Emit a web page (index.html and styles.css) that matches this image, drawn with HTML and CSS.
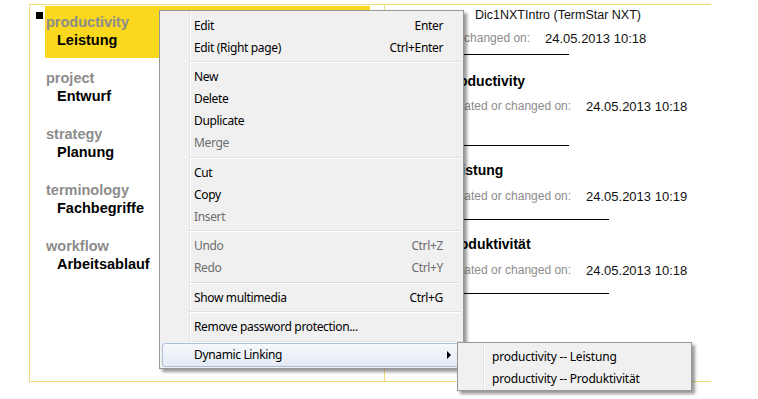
FILE: index.html
```html
<!DOCTYPE html>
<html lang="en">
<head>
    <meta charset="UTF-8">
    <meta name="viewport" content="width=device-width, initial-scale=1.0">
    <title>TermStar NXT - Dic1NXTIntro</title>
    <link rel="stylesheet" href="styles.css">
</head>
<body>
    <div class="frame">
        <div class="terms">
            <div class="term-row">
                <div class="gutter"><span class="mark"></span></div>
                <div class="term selected">
                    <div class="source">productivity</div>
                    <div class="target">Leistung</div>
                </div>
            </div>
            <div class="term-row">
                <div class="gutter"></div>
                <div class="term">
                    <div class="source">project</div>
                    <div class="target">Entwurf</div>
                </div>
            </div>
            <div class="term-row">
                <div class="gutter"></div>
                <div class="term">
                    <div class="source">strategy</div>
                    <div class="target">Planung</div>
                </div>
            </div>
            <div class="term-row">
                <div class="gutter"></div>
                <div class="term">
                    <div class="source">terminology</div>
                    <div class="target">Fachbegriffe</div>
                </div>
            </div>
            <div class="term-row">
                <div class="gutter"></div>
                <div class="term">
                    <div class="source">workflow</div>
                    <div class="target">Arbeitsablauf</div>
                </div>
            </div>
        </div>

        <div class="details">
            <div class="dict">
                <div class="dict-title">Dic1NXTIntro (TermStar NXT)</div>
                <div class="row">
                    <span class="label">Created or changed on:</span>
                    <span class="date">24.05.2013 10:18</span>
                </div>
                <div class="rule rule-dict"></div>
            </div>

            <div class="entry entry-first">
                <div class="heading">productivity</div>
                <div class="row">
                    <span class="label">Created or changed on:</span>
                    <span class="date">24.05.2013 10:18</span>
                </div>
                <div class="rule rule-short"></div>
            </div>

            <div class="entry">
                <div class="heading">Leistung</div>
                <div class="row">
                    <span class="label">Created or changed on:</span>
                    <span class="date">24.05.2013 10:19</span>
                </div>
                <div class="rule"></div>
            </div>

            <div class="entry">
                <div class="heading">Produktivität</div>
                <div class="row">
                    <span class="label">Created or changed on:</span>
                    <span class="date">24.05.2013 10:18</span>
                </div>
                <div class="rule"></div>
            </div>
        </div>
    </div>

    <div class="menu context-menu">
        <div class="item"><span>Edit</span><span class="key">Enter</span></div>
        <div class="item"><span>Edit (Right page)</span><span class="key">Ctrl+Enter</span></div>
        <div class="sep"></div>
        <div class="item"><span>New</span></div>
        <div class="item"><span>Delete</span></div>
        <div class="item"><span>Duplicate</span></div>
        <div class="item disabled"><span>Merge</span></div>
        <div class="sep"></div>
        <div class="item"><span>Cut</span></div>
        <div class="item"><span>Copy</span></div>
        <div class="item disabled"><span>Insert</span></div>
        <div class="sep"></div>
        <div class="item disabled"><span>Undo</span><span class="key">Ctrl+Z</span></div>
        <div class="item disabled"><span>Redo</span><span class="key">Ctrl+Y</span></div>
        <div class="sep"></div>
        <div class="item"><span>Show multimedia</span><span class="key">Ctrl+G</span></div>
        <div class="sep"></div>
        <div class="item"><span>Remove password protection...</span></div>
        <div class="sep sep-last"></div>
        <div class="item hover"><span>Dynamic Linking</span><span class="arrow"></span></div>
    </div>

    <div class="menu sub-menu">
        <div class="item"><span>productivity -- Leistung</span></div>
        <div class="item"><span>productivity -- Produktivität</span></div>
    </div>
</body>
</html>
```

FILE: styles.css
```css
body {
    margin: 0;
    background-color: #fff;
    font-family: "Liberation Sans", Arial, sans-serif;
    color: #000;
}

.frame {
    display: flex;
    width: 681px;
    height: 376px;
    margin: 4px 0 0 29px;
    border-top: 1px solid #f0dc7c;
    border-bottom: 1px solid #f0dc7c;
    border-left: 1px solid #f0dc7c;
}

/* left list of terms */

.terms {
    width: 354px;
    padding-top: 1px;
    border-right: 1px solid #f0dc7c;
}

.term-row {
    display: flex;
    margin-bottom: 4px;
}

.gutter {
    width: 15px;
}

.mark {
    display: block;
    width: 7px;
    height: 7px;
    margin: 6px 0 0 6px;
    background-color: #000;
}

.term {
    width: 324px;
    height: 36px;
    padding: 7px 0 9px 1px;
    font-size: 14.5px;
    font-weight: bold;
}

.term.selected {
    background-color: #f9d81e;
}

.source {
    line-height: 18px;
    color: #8c8c8c;
}

.target {
    line-height: 18px;
    padding-left: 11px;
}

/* right detail page */

.details {
    flex: 1;
}

.dict {
    padding-left: 19px;
}

.dict-title {
    height: 21px;
    line-height: 21px;
    padding-left: 71px;
    font-size: 12.5px;
    color: #111;
}

.dict .row {
    margin-top: 1px;
}

.row {
    display: flex;
    align-items: center;
    height: 22px;
    margin-top: 4px;
}

.label {
    width: 141px;
    font-size: 12px;
    color: #8c8c8c;
}

.date {
    font-size: 13px;
    color: #111;
}

.rule {
    width: 164px;
    height: 1px;
    margin-top: 12px;
    background-color: #000;
}

.dict .rule {
    margin-top: 5px;
}

.rule-dict {
    width: 165px;
}

.rule-short {
    width: 124px;
}

.entry {
    margin-left: 60px;
    margin-top: 14px;
}

.entry-first {
    margin-top: 16px;
}

.entry-first .row {
    margin-top: 3px;
}

.entry-first .rule {
    margin-top: 28px;
}

.heading {
    height: 21px;
    line-height: 21px;
    font-size: 14px;
    font-weight: bold;
}

/* context menu */

.menu {
    position: absolute;
    box-sizing: border-box;
    border: 1px solid #979797;
    background-color: #f0f0f0;
    box-shadow: 3px 3px 3px rgba(0, 0, 0, 0.4);
    font-family: "Noto Sans", "Open Sans", sans-serif;
    font-size: 12px;
    letter-spacing: -0.35px;
}

.context-menu {
    left: 159px;
    top: 10px;
    width: 305px;
    padding: 3px 2px 1px;
    background-image: linear-gradient(to right, transparent 29px, #e2e3e3 29px, #e2e3e3 30px, #fff 30px, #fff 31px, transparent 31px);
}

.sub-menu {
    left: 457px;
    top: 342px;
    width: 235px;
    height: 49px;
    padding: 2px 2px 0;
    letter-spacing: -0.2px;
    background-image: linear-gradient(to right, transparent 25px, #e2e3e3 25px, #e2e3e3 26px, #fff 26px, #fff 27px, transparent 27px);
}

.item {
    display: flex;
    justify-content: space-between;
    align-items: center;
    box-sizing: border-box;
    height: 22px;
    padding: 0 18px 0 32px;
    color: #000;
}

.item.disabled {
    color: #6d6d6d;
}

.item.hover {
    height: 24px;
    padding-right: 9px;
    border: 1px solid #a9bfdb;
    border-radius: 3px;
    background: linear-gradient(#f5f8fc, #e4ebf5);
    padding-left: 31px;
}

.arrow {
    width: 0;
    height: 0;
    border-left: 4px solid #000;
    border-top: 4px solid transparent;
    border-bottom: 4px solid transparent;
}

.sep {
    height: 1px;
    margin: 3px 0 2.5px 27px;
    background-color: #e0e0e0;
    border-bottom: 1px solid #fff;
}

.sep-last {
    margin-bottom: 0;
}
```
